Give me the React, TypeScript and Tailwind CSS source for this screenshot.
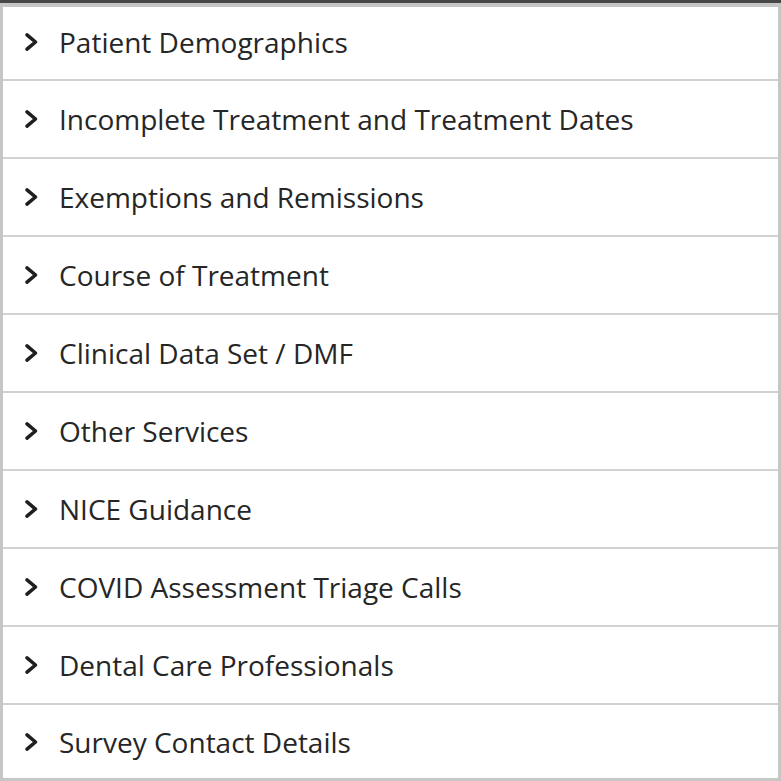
import React from "react";

const items = [
  "Patient Demographics",
  "Incomplete Treatment and Treatment Dates",
  "Exemptions and Remissions",
  "Course of Treatment",
  "Clinical Data Set / DMF",
  "Other Services",
  "NICE Guidance",
  "COVID Assessment Triage Calls",
  "Dental Care Professionals",
  "Survey Contact Details",
];

function Chevron() {
  return (
    <svg width="16" height="20" viewBox="0 0 16 20" className="shrink-0">
      <polyline
        points="4,2.8 12.5,10 4,17.2"
        fill="none"
        stroke="#1f1f1f"
        strokeWidth="3.6"
        strokeLinecap="round"
        strokeLinejoin="round"
      />
    </svg>
  );
}

export default function App() {
  return (
    <div className="w-[781px] h-[781px] bg-white flex flex-col" style={{ fontFamily: '"Open Sans", sans-serif' }}>
      <div className="h-[3px] bg-[#474747] shrink-0" />
      <div className="flex-1 flex flex-col border-x-[3px] border-b-[3px] border-t-[4px] border-[#c6c6c6] bg-white">
        {items.map((t, i) => (
          <div
            key={t}
            className={
              "flex items-center pl-[20px] gap-[20px] text-[28px] text-[#262626] shrink-0 " +
              (i === 0 ? "h-[74px] pb-[3px] " : i === items.length - 1 ? "flex-1 " : "h-[78px] ") +
              (i < items.length - 1 ? "border-b-2 border-[#d2d2d2]" : "")
            }
          >
            <Chevron />
            <span className="leading-none">{t}</span>
          </div>
        ))}
      </div>
    </div>
  );
}
